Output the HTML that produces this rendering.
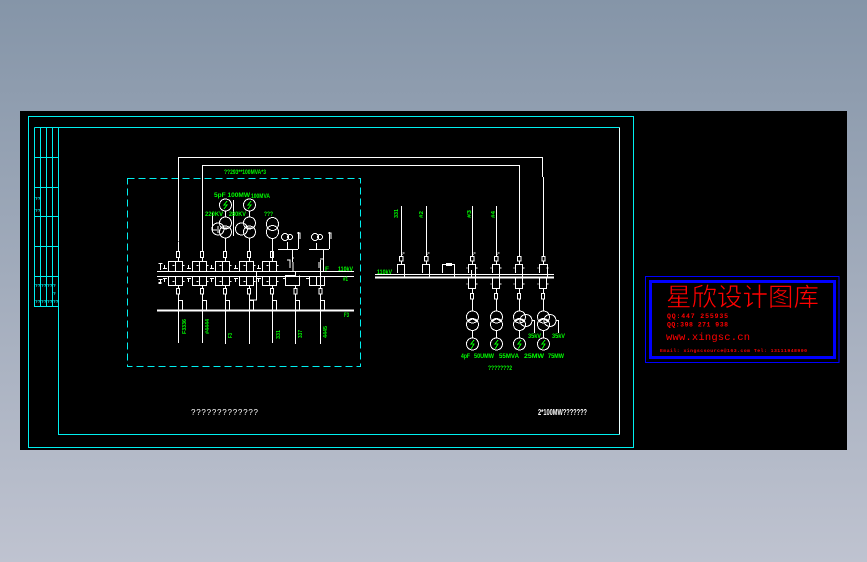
<!DOCTYPE html>
<html><head><meta charset="utf-8">
<style>
html,body{margin:0;padding:0;width:867px;height:562px;overflow:hidden}
body{background:linear-gradient(180deg,#8595a8 0%,#bfc3d0 100%)}
svg{position:absolute;left:0;top:0;display:block}
text{font-family:"Liberation Sans","Noto Sans CJK SC",sans-serif}
.g{fill:#00ff00;font-size:6px;font-weight:bold}
.v{font-size:5px}
.c{fill:#00ffff;font-size:4.5px;font-weight:bold}
.r{fill:#ff0000;font-family:"Liberation Mono",monospace;font-weight:bold}
</style></head>
<body>
<svg width="867" height="562" viewBox="0 0 867 562" shape-rendering="crispEdges">
<defs>
<g id="bayL" fill="none" stroke="#fff" stroke-width="1">
<path d="M-9.5 271V261.5H4.5V271M-2.5 261.5V271M0.5 257V261.5"/>
<path d="M-9.5 277V285.5H4.5V277M-2.5 277V285.5"/>
<path d="M0.5 285.5V288M0.5 294V310M0.5 300.5H4.5V310"/>
<rect x="-1.5" y="288.5" width="3" height="5.5"/>
<path d="M-5.5 265.5h2M-15 268.5h4M-13.5 265v4M4.5 265.5h2M-5.5 281.5h2M-15 278.5h4M-13.5 278v4M4.5 281.5h2"/>
</g>
<g id="bayS" fill="none" stroke="#fff">
<rect x="-1.5" y="251.5" width="3" height="6"/>
</g>
<g id="sideSym" fill="none" stroke="#fff">
<path d="M0.5 263v7M-1.5 263.5h4M-1.5 279.5h4M0.5 279v4"/>
<path d="M-1.5 283.5h3M-1.5 282.5h3"/>
</g>
<g id="bayR" fill="none" stroke="#fff">
<path d="M0.5 206V256M0.5 261V264.5"/>
<rect x="-1.5" y="256.5" width="3.5" height="4.5"/>
<path d="M-3.5 273V264.5H3.5V277"/>
<path d="M1.5 253h2M0.5 254.5h1"/>
</g>
<g id="bayR2" fill="none" stroke="#fff">
<path d="M-3.5 277V288.5H3.5V277M0.5 288.5V293M0.5 299V311M0.5 330V338M-5.5 268h1M3.5 268h2M-5.5 284h1M3.5 284h2"/>
<rect x="-1.5" y="293.5" width="3" height="5.5"/>
</g>
</defs>
<rect x="20" y="111" width="827" height="339" fill="#000"/>
<g fill="none" stroke="#00f0f0" stroke-width="1">
<path d="M28.5 116.5H633.5V447.5H28.5Z"/>
<path d="M34.5 127.5H619.5" />
<path d="M58.5 127.5V434.5H619.5" />
<path d="M34.5 127.5V306.5H58.5M40.5 127.5V306.5M46.5 127.5V306.5M52.5 127.5V306.5"/>
<path d="M34.5 157.5H58.5M34.5 187.5H58.5M34.5 216.5H58.5M34.5 246.5H58.5M34.5 276.5H58.5"/>
</g>
<path d="M619.5 127.5V434.5" stroke="#eaffff" fill="none"/>
<g class="c">
<text x="35" y="200">??</text><text x="35" y="212">??</text>
<text x="35" y="287">??</text><text x="41" y="287">??</text><text x="47" y="287">??</text><text x="53" y="287">?</text>
<text x="53" y="295">?</text>
<text x="35" y="303">??</text><text x="41" y="303">??</text><text x="47" y="303">??</text><text x="53" y="303">??</text>
</g>

<rect x="127.5" y="178.5" width="233" height="188" fill="none" stroke="#00f0f0" stroke-dasharray="7 4"/>

<g fill="none" stroke="#fff">
<path d="M178.5 241V157.5H542.5V177M543.5 177V252M178.5 241.5V252"/>
<path d="M202.5 252V165.5H519.5V252"/>
<path d="M157 271.5H354M157 276.5H354"/>
<path d="M157 310.5H354" stroke-width="2"/>
<path d="M375 274.5H554"/>
<path d="M375 277.5H554" stroke-width="2"/>
<path d="M256.5 271V300H250"/>
<path d="M178.5 310V343M202.5 310V343M225.5 310V344M249.5 310V344M272.5 310V343M295.5 310V344M320.5 310V344"/>
</g>
<use href="#bayL" x="178"/><use href="#bayL" x="202"/><use href="#bayL" x="225"/><use href="#bayL" x="249"/><use href="#bayL" x="272"/>
<use href="#bayS" x="178"/><use href="#bayS" x="202"/><use href="#bayS" x="225"/><use href="#bayS" x="249"/><use href="#bayS" x="272"/>
<g fill="none" stroke="#fff">
<path d="M295.5 271V275.5H285.5V285.5H299.5V275.5M295.5 285.5V288M295.5 294V310M295.5 300.5H299.5V310"/>
<rect x="294" y="288.5" width="3" height="5.5"/>
<path d="M320.5 260V288M320.5 294V310M320.5 300.5H324.5V310M309.5 276V285.5H324.5V276M316.5 276V285.5"/>
<rect x="319" y="288.5" width="3" height="5.5"/>
<path d="M283 278.5h3M306 278.5h3"/>
</g>
<use href="#sideSym" x="160"/>

<g fill="none" stroke="#fff">
<circle cx="225.5" cy="205" r="6"/><circle cx="249.5" cy="205" r="6"/>
<circle cx="225.5" cy="223" r="6"/><circle cx="225.5" cy="232" r="6"/><circle cx="218" cy="229" r="6"/>
<circle cx="249.5" cy="223" r="6"/><circle cx="249.5" cy="232" r="6"/><circle cx="241.5" cy="229" r="6"/>
<ellipse cx="272.5" cy="224" rx="6" ry="6.5"/><ellipse cx="272.5" cy="232" rx="6" ry="6.5"/>
<circle cx="285" cy="237" r="3.5"/><circle cx="290" cy="237" r="2.5"/>
<circle cx="315" cy="237" r="3.5"/><circle cx="320" cy="237" r="2.5"/>
<path d="M225.5 211V217M225.5 238V251M249.5 211V217M249.5 238V251M272.5 238V251M272.5 251V261"/>
<path d="M212.5 213V230H217M233.5 200V236"/>
<path d="M218 226V233M222 228H229M245 228H253"/>
<path d="M278 249.5H298M298.5 249V232M297 233h3V239M287.5 242V249M292.5 249V262M287 260h3V268M292 258h2M293 262v9"/>
<path d="M309 249.5H329M329.5 249V232M328 233h3V239M316.5 243V249M323.5 250V271M320 259h3M319 262v6"/>
</g>
<use href="#bayS" x="272" y="0"/>

<use href="#bayR" x="401"/><use href="#bayR" x="426"/><use href="#bayR" x="472"/><use href="#bayR" x="496"/>
<g fill="none" stroke="#fff">
<path d="M519.5 252V256M519.5 261V264M543.5 252V256M543.5 261V264"/>
<rect x="517.5" y="256.5" width="3.5" height="4.5"/><rect x="542" y="256.5" width="3" height="4.5"/>
<path d="M515.5 273V264.5H522.5V277M539.5 273V264.5H547.5V277"/>
<path d="M442.5 273V264.5H454.5V277"/><rect x="446.5" y="263.5" width="5" height="2"/>
<path d="M471.5 270V277"/>
</g>
<use href="#bayR2" x="472"/><use href="#bayR2" x="496"/><use href="#bayR2" x="519"/><use href="#bayR2" x="543"/>
<g fill="none" stroke="#fff">
<circle cx="472.5" cy="317" r="6"/><circle cx="472.5" cy="324.5" r="6"/>
<circle cx="496.5" cy="317" r="6"/><circle cx="496.5" cy="324.5" r="6"/>
<circle cx="519.5" cy="317" r="6"/><circle cx="519.5" cy="324.5" r="6"/><circle cx="526" cy="320.5" r="6"/>
<circle cx="543.5" cy="317" r="6"/><circle cx="543.5" cy="324.5" r="6"/><circle cx="550" cy="320.5" r="6"/>
<circle cx="472.5" cy="344" r="6"/><circle cx="496.5" cy="344" r="6"/><circle cx="519.5" cy="344" r="6"/><circle cx="543.5" cy="344" r="6"/>
<path d="M515 321L519.5 319L524 321M539 321L543.5 319L548 321M468 321L472.5 319L477 321M492 321L496.5 319L501 321"/>
</g>
<path d="M532 320.5H534.5V333M556 320.5H558.5V333" fill="none" stroke="#fff"/>

<g stroke="#00ff00" fill="none">
<path d="M227 201L224 205H227L224 209M251 201L248 205H251L248 209"/>
<path d="M474 340L471 344H474L471 349M498 340L495 344H498L495 349M521 340L518 344H521L518 349M545 340L542 344H545L542 349"/>
</g>

<g class="g">
<text x="224" y="174" textLength="42" lengthAdjust="spacingAndGlyphs">??293**100MVA*3</text>
<text x="214" y="197" textLength="36" lengthAdjust="spacingAndGlyphs">5pF 100MW</text>
<text x="251" y="198" textLength="19" lengthAdjust="spacingAndGlyphs">100MVA</text>
<text x="205" y="216" textLength="18" lengthAdjust="spacingAndGlyphs">220KV</text>
<text x="229" y="216" textLength="17" lengthAdjust="spacingAndGlyphs">280KV</text>
<text x="264" y="216" textLength="9" lengthAdjust="spacingAndGlyphs">???</text>
<text x="338" y="271" textLength="15" lengthAdjust="spacingAndGlyphs">110kV</text>
<text x="325" y="271" textLength="4" lengthAdjust="spacingAndGlyphs">F</text>
<text x="343" y="281" textLength="5" lengthAdjust="spacingAndGlyphs">#1</text>
<text x="344" y="317" textLength="5" lengthAdjust="spacingAndGlyphs">F3</text>
<text x="377" y="274" textLength="15" lengthAdjust="spacingAndGlyphs">110kV</text>
<text x="461" y="358" textLength="9" lengthAdjust="spacingAndGlyphs">4pF</text>
<text x="474" y="358" textLength="20" lengthAdjust="spacingAndGlyphs">50UMW</text>
<text x="499" y="358" textLength="20" lengthAdjust="spacingAndGlyphs">55MVA</text>
<text x="524" y="358" textLength="20" lengthAdjust="spacingAndGlyphs">25MW</text>
<text x="548" y="358" textLength="16" lengthAdjust="spacingAndGlyphs">75MW</text>
<text x="488" y="370" textLength="24" lengthAdjust="spacingAndGlyphs">???????2</text>
<text x="528" y="338" textLength="13" lengthAdjust="spacingAndGlyphs">35kV</text>
<text x="552" y="338" textLength="13" lengthAdjust="spacingAndGlyphs">35kV</text>
<text class="v" transform="translate(186,334) rotate(-90)" textLength="15" lengthAdjust="spacingAndGlyphs">F3336</text>
<text class="v" transform="translate(209,334) rotate(-90)" textLength="15" lengthAdjust="spacingAndGlyphs">#4444</text>
<text class="v" transform="translate(232,338) rotate(-90)" textLength="5" lengthAdjust="spacingAndGlyphs">F3</text>
<text class="v" transform="translate(280,339) rotate(-90)" textLength="9" lengthAdjust="spacingAndGlyphs">331</text>
<text class="v" transform="translate(302,338) rotate(-90)" textLength="8" lengthAdjust="spacingAndGlyphs">337</text>
<text class="v" transform="translate(327,338) rotate(-90)" textLength="12" lengthAdjust="spacingAndGlyphs">4445</text>
<text class="v" transform="translate(398,218) rotate(-90)" textLength="9" lengthAdjust="spacingAndGlyphs">331</text>
<text class="v" transform="translate(423,218) rotate(-90)" textLength="7" lengthAdjust="spacingAndGlyphs">#2</text>
<text class="v" transform="translate(471,218) rotate(-90)" textLength="8" lengthAdjust="spacingAndGlyphs">#3</text>
<text class="v" transform="translate(495,218) rotate(-90)" textLength="7" lengthAdjust="spacingAndGlyphs">#4</text>
</g>
<text x="191" y="415" fill="#fff" font-size="8" textLength="67" lengthAdjust="spacing">?????????????</text>
<text x="538" y="415" fill="#fff" font-size="8" font-weight="bold" textLength="49" lengthAdjust="spacingAndGlyphs">2*100MW???????</text>

<g fill="none" stroke="#0000ff">
<rect x="645.5" y="276.5" width="193.5" height="86"/>
<rect x="650.5" y="281.5" width="184" height="76" stroke-width="3"/>
</g>
<text x="666" y="306" fill="#ff0000" stroke="#000" stroke-width="0.55" font-size="25.5" style="font-family:'Noto Sans CJK SC',sans-serif">星欣设计图库</text>
<text class="r" x="667" y="318" font-size="6.5" textLength="61" lengthAdjust="spacing">QQ:447 255935</text>
<text class="r" x="667" y="326.5" font-size="6.5" textLength="61" lengthAdjust="spacing">QQ:398 271 938</text>
<text x="666" y="340" fill="#ff0000" font-size="10.5" style="font-family:'Liberation Mono',monospace" textLength="84" lengthAdjust="spacing">www.xingsc.cn</text>
<text class="r" x="660" y="352" font-size="4.8" textLength="147" lengthAdjust="spacing">Email: xingscsource@163.com  Tel: 13111948900</text>
</svg>
</body></html>
